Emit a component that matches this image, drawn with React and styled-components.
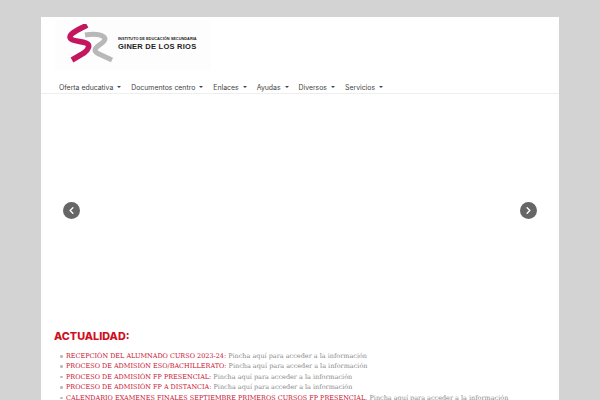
import React from "react";
import styled, { createGlobalStyle } from "styled-components";
import { ChevronLeft, ChevronRight } from "lucide-react";

const GlobalStyle = createGlobalStyle`
  html, body {
    margin: 0;
    height: 400px;
    overflow: hidden;
    background: #d3d3d3;
  }
`;

const Page = styled.div`
  width: 518px;
  height: 383px;
  margin: 17px auto 0;
  background: #fff;
  overflow: hidden;
`;

const Header = styled.header`
  height: 60px;
  padding: 3px 0 0 14px;
`;

const Logo = styled.div`
  width: 156px;
  height: 50px;
  display: flex;
  align-items: center;
  background: #fdfdfd;
`;

const LogoMark = styled.svg`
  width: 52px;
  height: 42px;
  margin-left: 11px;
  flex: none;
`;

const LogoText = styled.div`
  margin-top: -4px;
  font-family: "Liberation Sans", Arial, sans-serif;
  color: #222;
`;

const LogoSmall = styled.div`
  font-size: 3.9px;
  line-height: 6px;
  font-weight: 700;
  white-space: nowrap;
`;

const LogoBig = styled.div`
  font-size: 7.5px;
  line-height: 9px;
  font-weight: 700;
  letter-spacing: 0.25px;
  white-space: nowrap;
`;

const Nav = styled.nav`
  display: flex;
  height: 12px;
  padding: 1px 0 0 18px;
  gap: 10px;
  align-items: center;
  border-bottom: 1px solid #eee;
`;

const NavItem = styled.a`
  display: flex;
  align-items: center;
  gap: 4px;
  font-family: Inter, sans-serif;
  font-size: 6.9px;
  color: #444;
  white-space: nowrap;

  &::after {
    content: "";
    border-left: 2px solid transparent;
    border-right: 2px solid transparent;
    border-top: 2px solid #444;
  }
`;

const Slider = styled.div`
  position: relative;
  height: 226px;
`;

const Arrow = styled.button`
  position: absolute;
  top: 108px;
  ${(p) => (p.$right ? "right: 22px;" : "left: 22px;")}
  width: 17px;
  height: 17px;
  padding: 0;
  border: 0;
  border-radius: 50%;
  background: #666;
  color: #fff;
  display: flex;
  align-items: center;
  justify-content: center;
`;

const News = styled.section`
  padding: 9px 0 0 13px;
`;

const Title = styled.h2`
  margin: 0 0 6px;
  font-family: Inter, sans-serif;
  font-size: 10.8px;
  line-height: 16px;
  font-weight: 800;
  color: #d0101f;
`;

const List = styled.ul`
  margin: 0;
  padding: 0 0 0 12px;
  list-style: none;
`;

const Item = styled.li`
  position: relative;
  font-family: "DejaVu Serif", serif;
  font-size: 6.47px;
  line-height: 10.4px;
  color: #888;
  white-space: nowrap;

  &::before {
    content: "";
    position: absolute;
    left: -6px;
    top: 4px;
    width: 2.5px;
    height: 2.5px;
    border-radius: 50%;
    background: #bbb;
  }
`;

const Lead = styled.span`
  color: #c8102e;
`;

const menu = ["Oferta educativa", "Documentos centro", "Enlaces", "Ayudas", "Diversos", "Servicios"];

const news = [
  ["RECEPCIÓN DEL ALUMNADO CURSO 2023-24:", " Pincha aquí para acceder a la información"],
  ["PROCESO DE ADMISIÓN ESO/BACHILLERATO:", " Pincha aquí para acceder a la información"],
  ["PROCESO DE ADMISIÓN FP PRESENCIAL:", " Pincha aquí para acceder a la información"],
  ["PROCESO DE ADMISIÓN FP A DISTANCIA:", " Pincha aquí para acceder a la información"],
  ["CALENDARIO EXAMENES FINALES SEPTIEMBRE PRIMEROS CURSOS FP PRESENCIAL.", " Pincha aquí para acceder a la información"],
];

export default function App() {
  return (
    <>
      <GlobalStyle />
      <Page>
        <Header>
          <Logo>
            <LogoMark viewBox="0 0 52 42">
              <path d="M21 1 C14 5 4 9 4 13 C4 17 14 17 20 19 C25 21 22 26 18 29 L6 36" fill="none" stroke="#c4165f" strokeWidth="5.5" />
              <path d="M19 11 C25 10 34 10 38 13 C41 16 36 19 32 22 C27 26 29 28 33 30 L46 36" fill="none" stroke="#b8b8b8" strokeWidth="5" />
            </LogoMark>
            <LogoText>
              <LogoSmall>INSTITUTO DE EDUCACIÓN SECUNDARIA</LogoSmall>
              <LogoBig>GINER DE LOS RIOS</LogoBig>
            </LogoText>
          </Logo>
        </Header>
        <Nav>
          {menu.map((m) => (
            <NavItem key={m}>{m}</NavItem>
          ))}
        </Nav>
        <Slider>
          <Arrow aria-label="Anterior">
            <ChevronLeft size={11} strokeWidth={3} />
          </Arrow>
          <Arrow $right aria-label="Siguiente">
            <ChevronRight size={11} strokeWidth={3} />
          </Arrow>
        </Slider>
        <News>
          <Title>ACTUALIDAD:</Title>
          <List>
            {news.map(([lead, rest]) => (
              <Item key={lead}>
                <Lead>{lead}</Lead>
                {rest}
              </Item>
            ))}
          </List>
        </News>
      </Page>
    </>
  );
}
